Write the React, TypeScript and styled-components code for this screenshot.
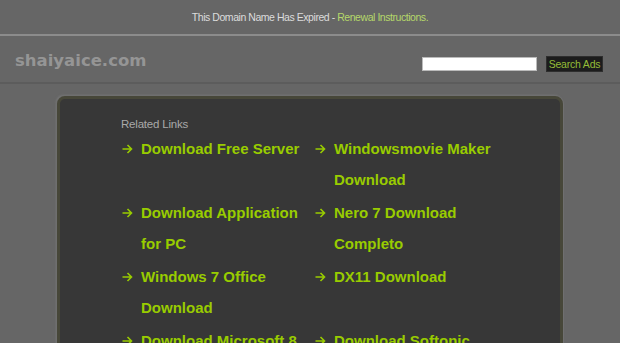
import React, {ReactElement} from 'react';
import styled, {createGlobalStyle} from 'styled-components';

const GlobalStyle = createGlobalStyle`
  html, body {
    margin: 0;
    padding: 0;
    background: #666666;
    font-family: "Liberation Sans", Arial, sans-serif;
    overflow: hidden;
  }
`;

const Page = styled.div`
  width: 620px;
  height: 343px;
  overflow: hidden;
`;

const Notice = styled.div`
  height: 33px;
  display: flex;
  align-items: center;
  justify-content: center;
  font-size: 10.5px;
  letter-spacing: -0.45px;
  color: #dcdcdc;
  padding-bottom: 1px;
`;

const NoticeLink = styled.span`
  color: #b5d86a;
`;

const Rule = styled.div<{color: string;}>`
  height: 2px;
  background: ${({color}) => color};
`;

const Header = styled.div`
  height: 46px;
  display: flex;
  align-items: center;
  justify-content: space-between;
  padding: 0 17px 0 15px;
`;

const Domain = styled.div`
  font-family: "DejaVu Sans", Verdana, sans-serif;
  font-size: 16.5px;
  font-weight: bold;
  color: #959595;
  margin-top: 2px;
`;

const Search = styled.form`
  display: flex;
  align-items: center;
  gap: 9px;
  margin-top: 10px;
`;

const SearchInput = styled.input`
  width: 115px;
  height: 14px;
  padding: 0;
  border: 1px solid #bbbbbb;
  background: #ffffff;
  box-sizing: border-box;
`;

const SearchButton = styled.button`
  height: 16px;
  width: 57px;
  padding: 0;
  border: 1px solid #2e2e2e;
  background: #1c1c1c;
  color: #94bd37;
  font-family: "Liberation Sans", Arial, sans-serif;
  font-size: 10.5px;
  letter-spacing: -0.2px;
  line-height: 14px;
`;

const Main = styled.div`
  padding: 12px 57px 0 57px;
`;

const Panel = styled.div`
  height: 300px;
  background: #373737;
  border: 3px solid #474739;
  border-radius: 8px;
  box-shadow: 0 0 0 1px #6f6f6f, -1px -1px 2px #7a7a7a;
  padding: 19px 0 0 61px;
`;

const Title = styled.div`
  font-size: 11.5px;
  color: #a9a9a9;
  letter-spacing: -0.2px;
  margin-bottom: 3px;
`;

const Links = styled.div`
  display: grid;
  grid-template-columns: 193px 193px;
  row-gap: 2px;
`;

const LinkItem = styled.a`
  display: flex;
  color: #99cc00;
  font-size: 15px;
  font-weight: bold;
  line-height: 31px;
  text-decoration: none;
`;

const Arrow = styled.svg`
  flex: 0 0 20px;
  height: 31px;
`;

function ArrowIcon(): ReactElement {
  return (
    <Arrow viewBox="0 0 20 31" fill="none">
      <path
        d="M1.5 16H10M6.5 12L10.5 16L6.5 20"
        stroke="#99cc00"
        strokeWidth="1.6"
      />
    </Arrow>
  );
}

const links = [
  'Download Free Server',
  'Windowsmovie Maker Download',
  'Download Application for PC',
  'Nero 7 Download Completo',
  'Windows 7 Office Download',
  'DX11 Download',
  'Download Microsoft 8',
  'Download Softonic',
];

export default function App(): ReactElement {
  return (
    <Page>
      <GlobalStyle />
      <Notice>
        This Domain Name Has Expired -&nbsp;
        <NoticeLink>Renewal Instructions.</NoticeLink>
      </Notice>
      <Rule color="#8c8c8c" />
      <Header>
        <Domain>shaiyaice.com</Domain>
        <Search onSubmit={(e) => e.preventDefault()}>
          <SearchInput type="text" />
          <SearchButton type="submit">Search Ads</SearchButton>
        </Search>
      </Header>
      <Rule color="#5c5c5c" />
      <Main>
        <Panel>
          <Title>Related Links</Title>
          <Links>
            {links.map((text) => (
              <LinkItem key={text} href="#">
                <ArrowIcon />
                <span>{text}</span>
              </LinkItem>
            ))}
          </Links>
        </Panel>
      </Main>
    </Page>
  );
}
